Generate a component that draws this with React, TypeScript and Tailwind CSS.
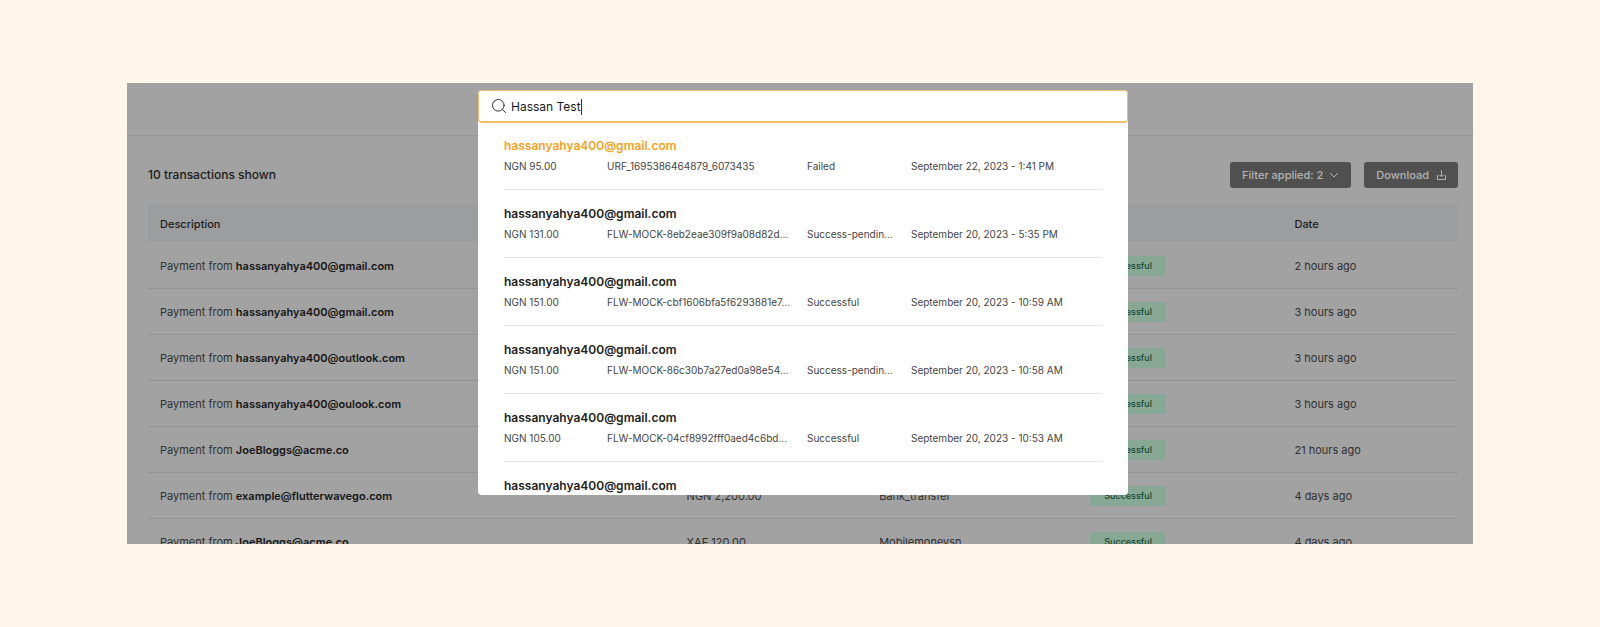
type Transaction = {
  email: string;
  amount?: string;
  method?: string;
  date: string;
};

const transactions: Transaction[] = [
  { email: "hassanyahya400@gmail.com", date: "2 hours ago" },
  { email: "hassanyahya400@gmail.com", date: "3 hours ago" },
  { email: "hassanyahya400@outlook.com", date: "3 hours ago" },
  { email: "hassanyahya400@oulook.com", date: "3 hours ago" },
  { email: "JoeBloggs@acme.co", date: "21 hours ago" },
  { email: "example@flutterwavego.com", amount: "NGN 2,200.00", method: "Bank_transfer", date: "4 days ago" },
  { email: "JoeBloggs@acme.co", amount: "XAF 120.00", method: "Mobilemoneysn", date: "4 days ago" },
];

const results = [
  { amount: "NGN 95.00", reference: "URF_1695386464879_6073435", status: "Failed", date: "September 22, 2023 - 1:41 PM" },
  { amount: "NGN 131.00", reference: "FLW-MOCK-8eb2eae309f9a08d82d...", status: "Success-pendin...", date: "September 20, 2023 - 5:35 PM" },
  { amount: "NGN 151.00", reference: "FLW-MOCK-cbf1606bfa5f6293881e7...", status: "Successful", date: "September 20, 2023 - 10:59 AM" },
  { amount: "NGN 151.00", reference: "FLW-MOCK-86c30b7a27ed0a98e54...", status: "Success-pendin...", date: "September 20, 2023 - 10:58 AM" },
  { amount: "NGN 105.00", reference: "FLW-MOCK-04cf8992fff0aed4c6bd...", status: "Successful", date: "September 20, 2023 - 10:53 AM" },
  { amount: "", reference: "", status: "", date: "" },
];

function TransactionsTable() {
  return (
    <table className="mt-4 w-full table-fixed text-left text-[11px] text-[#303030]">
      <thead className="bg-[#9b9d9f] text-[#1c1c1c]">
        <tr className="h-[38px]">
          <th className="w-[40.2%] px-3 pt-0.5 font-medium">Description</th>
          <th className="w-[14.7%] px-3 pt-0.5 font-medium">Amount</th>
          <th className="w-[16.1%] px-3 pt-0.5 font-medium">Method</th>
          <th className="w-[15.6%] px-3 pt-0.5 font-medium">Status</th>
          <th className="px-3 pt-0.5 font-medium">Date</th>
        </tr>
      </thead>
      <tbody>
        {transactions.map((t, i) => (
          <tr key={i} className="h-[46px] border-b border-[#939393]">
            <td className="px-3 pt-0.5">
              Payment from <span className="font-semibold text-[#161616]">{t.email}</span>
            </td>
            <td className="px-3 pt-0.5">{t.amount}</td>
            <td className="px-3 pt-0.5">{t.method}</td>
            <td className="px-3 pt-0.5">
              <span className="inline-flex h-5 w-19 items-center justify-center rounded-xs bg-[#88a896] text-[9px] font-medium text-[#15482c]">
                Successful
              </span>
            </td>
            <td className="px-3 pt-0.5">{t.date}</td>
          </tr>
        ))}
      </tbody>
    </table>
  );
}

function SearchDialog() {
  return (
    <div role="dialog" aria-label="Search transactions" className="flex w-[650px] flex-col overflow-hidden rounded-sm bg-white">
      <label className="flex h-[33px] shrink-0 items-center gap-1 rounded-sm border border-b-2 border-[#ecc06a] px-3">
        <svg width="16" height="16" viewBox="0 0 16 16" fill="none" stroke="#333" strokeLinecap="round" aria-hidden="true">
          <circle cx="7.3" cy="7.3" r="5.8" />
          <path d="M11.5 11.5 14.6 14.6" />
        </svg>
        <span className="flex items-center pt-0.5">
          <input
            type="text"
            aria-label="Search"
            defaultValue="Hassan Test"
            className="field-sizing-content text-xs text-[#1a1a1a] outline-none"
          />
          <span className="h-4 w-px bg-[#333]" />
        </span>
      </label>
      <ul className="-mt-px min-h-0 overflow-hidden px-[26px]">
        {results.map((r, i) => (
          <li key={i} className="h-[68px] border-b border-[#e6e6e6] pt-4">
            <a href="#" className={i === 0 ? "block text-xs leading-4 font-semibold text-[#f5a122]" : "block text-xs leading-4 font-semibold text-[#222]"}>
              hassanyahya400@gmail.com
            </a>
            <div className="mt-1 flex text-[10px] leading-4 whitespace-nowrap text-[#444]">
              <span className="w-[103px]">{r.amount}</span>
              <span className="w-[200px]">{r.reference}</span>
              <span className="w-[104px]">{r.status}</span>
              <span>{r.date}</span>
            </div>
          </li>
        ))}
      </ul>
    </div>
  );
}

export default function App() {
  return (
    <main className="h-screen bg-[#fff5e8] px-[127px] py-[83px] font-['Inter',sans-serif]">
      <div className="relative h-full overflow-hidden bg-[#a2a2a2]">
        <header className="h-[53px] border-b border-[#969696]" />
        <section className="pr-[15px] pl-[21px] pt-[26px]">
          <div className="flex items-center justify-between">
            <h1 className="text-xs font-medium text-[#1c1c1c]">10 transactions shown</h1>
            <div className="flex gap-[13px] text-[11px] font-medium text-[#b4b4b4]">
              <button className="flex h-[26px] items-center gap-1.5 rounded-[3px] bg-[#505050] px-3">
                Filter applied: 2
                <svg width="10" height="6" viewBox="0 0 10 6" fill="none" stroke="currentColor" aria-hidden="true">
                  <path d="M1 1l4 4 4-4" />
                </svg>
              </button>
              <button className="flex h-[26px] items-center gap-2 rounded-[3px] bg-[#505050] px-3">
                Download
                <svg width="9" height="10" viewBox="0 0 9 10" fill="none" stroke="currentColor" aria-hidden="true">
                  <path d="M4.5 0.5v6M2.5 4.8l2 2 2-2M1.5 5.5H0.5v4h8v-4h-1" />
                </svg>
              </button>
            </div>
          </div>
          <TransactionsTable />
        </section>
        <div className="absolute inset-0 flex justify-center pt-[7px] pb-[49px] pl-[6px]">
          <SearchDialog />
        </div>
      </div>
    </main>
  );
}
